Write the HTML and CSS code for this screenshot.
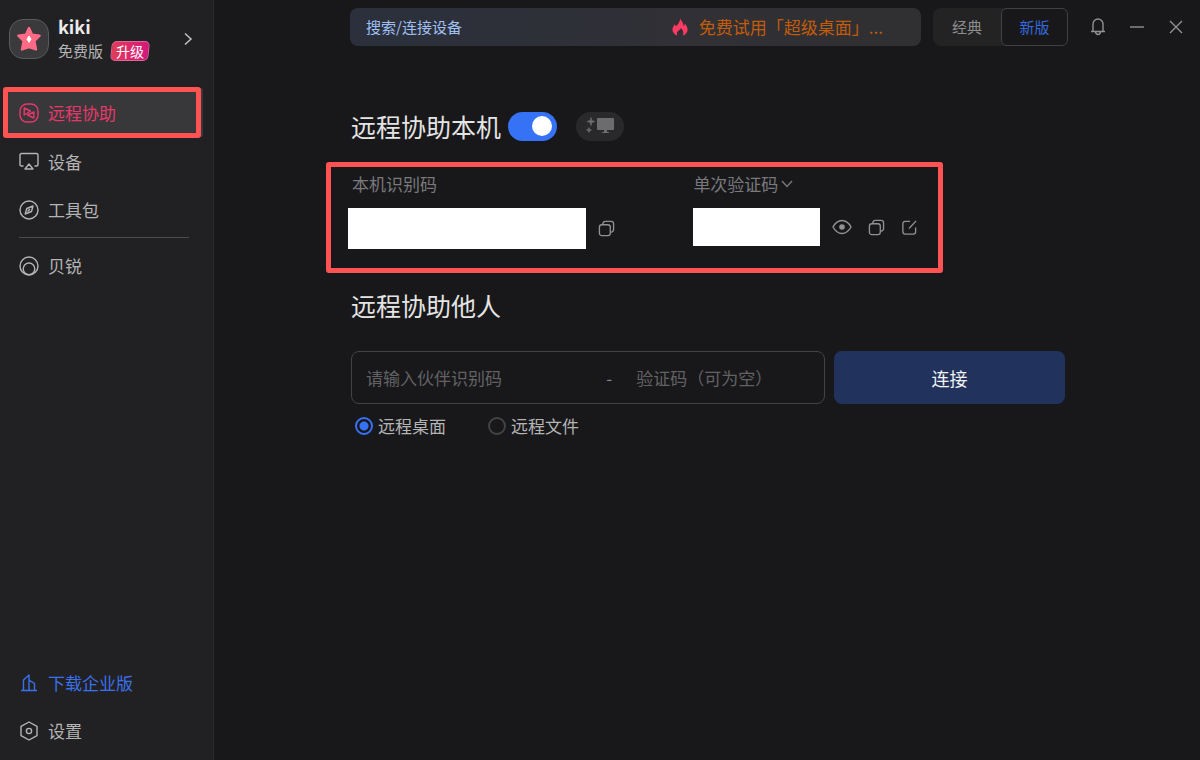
FILE: index.html
```html
<!DOCTYPE html>
<html lang="zh-CN">
<head>
<meta charset="utf-8">
<meta name="viewport" content="width=device-width, initial-scale=1">
<title>远程协助</title>
<link rel="stylesheet" href="styles.css">
</head>
<body>
<div class="app">
  <aside class="sidebar">
    <div class="profile">
      <span class="avatar">
        <svg width="26" height="26" viewBox="0 0 26 26" aria-hidden="true">
          <path d="M13 2 L16 8.600 L23.600 9.600 L18.400 15 L20 23.400 L13 21.200 L6 23.400 L7.600 15 L2.400 9.600 L10 8.600 Z" fill="#ff6b86" stroke="#ff6b86" stroke-width="2.400" stroke-linejoin="round"/>
          <path d="M13 10 L15 13.200 L13 16.400 L11 13.200 Z" fill="#fff" stroke="#fff" stroke-linejoin="round"/>
        </svg>
      </span>
      <div class="profile-text">
        <strong class="profile-name">kiki</strong>
        <div class="profile-plan">
          <span>免费版</span>
          <button class="upgrade" type="button"><span class="upgrade-shape"></span><span class="upgrade-label">升级</span></button>
        </div>
      </div>
      <button class="icon-button profile-more" type="button" aria-label="账号详情">
        <svg width="10" height="14" viewBox="0 0 10 14"><path d="M2 1.500 L8 7 L2 12.500" fill="none" stroke="currentColor" stroke-width="1.5"/></svg>
      </button>
    </div>

    <nav class="nav">
      <a class="nav-item nav-item-active" href="#assist" aria-current="page">
        <svg class="nav-icon" viewBox="0 0 20 20"><rect x="1" y="1" width="18" height="18" rx="7"/><path d="M5.200 5 L11.500 8 L5.200 12 Z M15 9 L8.500 12 L14.800 15 Z"/></svg>
        <span>远程协助</span>
      </a>
      <a class="nav-item" href="#devices">
        <svg class="nav-icon" viewBox="0 0 20 20"><path d="M4.500 14 H2.500 Q1 14 1 12.500 V3 Q1 1.500 2.500 1.500 H17.500 Q19 1.500 19 3 V12.500 Q19 14 17.500 14 H15.500"/><path d="M10 12 L14 17 H6 Z"/></svg>
        <span>设备</span>
      </a>
      <a class="nav-item" href="#tools">
        <svg class="nav-icon" viewBox="0 0 20 20"><circle cx="10" cy="10" r="9"/><path d="M14 6 L12.500 11.500 L6.200 14 L7.800 8.500 Z M8.600 11.400 L11 9"/></svg>
        <span>工具包</span>
      </a>
      <hr class="nav-rule">
      <a class="nav-item" href="#oray">
        <svg class="nav-icon" viewBox="0 0 20 20"><circle cx="10" cy="10" r="9"/><circle cx="10" cy="12.800" r="5.800"/></svg>
        <span>贝锐</span>
      </a>
    </nav>

    <nav class="nav nav-bottom">
      <a class="nav-item nav-item-link" href="#enterprise">
        <svg class="nav-icon" viewBox="0 0 20 20"><path d="M2 17.500 H18 M4.500 17.500 V7 L10 2 V17.500 M10 7.200 L15.500 10.500 V17.500"/></svg>
        <span>下载企业版</span>
      </a>
      <a class="nav-item" href="#settings">
        <svg class="nav-icon" viewBox="0 0 20 20"><path d="M10 1 L18 5.400 V14.600 L10 19 L2 14.600 V5.400 Z"/><circle cx="10" cy="10" r="2.600"/></svg>
        <span>设置</span>
      </a>
    </nav>
  </aside>

  <div class="main">
    <header class="topbar">
      <div class="search">
        <input class="search-input" type="text" placeholder="搜索/连接设备" aria-label="搜索/连接设备">
        <a class="promo" href="#trial">
          <svg width="16" height="18" viewBox="0 0 18 20" aria-hidden="true"><path d="M9 0 C10 3 13 5 13 9 C14 8.500 14.300 7.500 14.300 6 C16 8 17.500 10 17.500 13 C17.500 16 15.500 18.500 12 19.500 C13.500 17 13 14 10 11 C9.500 13.500 5.500 14 5.500 17 C5.500 18 5.700 18.800 6 19.500 C3 18.500 0.500 16 0.500 13 C0.500 10.500 2 9.500 2.800 7 C3.800 7.700 4.300 8.500 4.300 9.500 C6.500 7.500 9.500 4 9 0 Z" fill="#ff3b63"/></svg>
          <span>免费试用「超级桌面」...</span>
        </a>
      </div>
      <div class="segmented">
        <button class="segment" type="button">经典</button>
        <button class="segment segment-active" type="button" aria-pressed="true">新版</button>
      </div>
      <div class="window-tools">
        <button class="icon-button" type="button" aria-label="通知">
          <svg width="16" height="18" viewBox="0 0 16 18"><path d="M1 13.500 H15 M3 13.500 V6 A5 5 0 0 1 13 6 V13.500 M5.500 14 Q6 16.500 8 16.500 T10.500 14" fill="none" stroke="currentColor" stroke-width="1.400"/></svg>
        </button>
        <button class="icon-button" type="button" aria-label="最小化">
          <svg width="16" height="16" viewBox="0 0 16 16"><path d="M1 8 H15" stroke="currentColor" stroke-width="1.400"/></svg>
        </button>
        <button class="icon-button" type="button" aria-label="关闭">
          <svg width="16" height="16" viewBox="0 0 16 16"><path d="M2 2 L14 14 M14 2 L2 14" stroke="currentColor" stroke-width="1.400"/></svg>
        </button>
      </div>
    </header>

    <main class="content">
      <div class="heading-row">
        <h2 class="heading">远程协助本机</h2>
        <input class="switch" type="checkbox" checked aria-label="远程协助本机">
        <button class="screen-pill" type="button" aria-label="超级桌面">
          <svg width="28" height="18" viewBox="0 0 28 18"><path d="M5 0.500 L6 3.500 L9 4.500 L6 5.500 L5 8.500 L4 5.500 L1 4.500 L4 3.500 Z M3 10.500 L3.800 12.200 L5.500 13 L3.800 13.800 L3 15.500 L2.200 13.800 L0.500 13 L2.200 12.200 Z" fill="currentColor" stroke="currentColor" stroke-width="0.600"/><rect x="11" y="1" width="17" height="12" rx="1" fill="currentColor"/><path d="M18 13 H21 V14.500 L24 16 H15 L18 14.500 Z" fill="currentColor"/></svg>
        </button>
      </div>

      <section class="codes">
        <div class="code">
          <label class="code-label" for="device-code">本机识别码</label>
          <div class="code-row">
            <input class="code-value" id="device-code" type="text" readonly>
            <button class="icon-button" type="button" aria-label="复制识别码">
              <svg class="tool-icon" viewBox="0 0 18 18"><rect x="1.500" y="5" width="11.500" height="11.500" rx="2.500"/><path d="M5 4.500 Q5.200 1.500 8 1.500 H14 Q16.500 1.500 16.500 4 V10 Q16.500 12.500 13.500 13"/></svg>
            </button>
          </div>
        </div>
        <div class="code">
          <label class="code-label" for="verify-code">单次验证码<svg width="14" height="10" viewBox="0 0 14 10" aria-hidden="true"><path d="M2 2 L7 7.500 L12 2" fill="none" stroke="currentColor" stroke-width="1.400"/></svg></label>
          <div class="code-row">
            <input class="code-value code-value-short" id="verify-code" type="text" readonly>
            <div class="code-tools">
              <button class="icon-button" type="button" aria-label="显示验证码">
                <svg width="20" height="16" viewBox="0 0 20 16"><path d="M1 8 Q4.500 1.500 10 1.500 T19 8 Q15.500 14.500 10 14.500 T1 8 Z" fill="none" stroke="currentColor" stroke-width="1.400"/><circle cx="10" cy="8" r="2.800" fill="currentColor"/></svg>
              </button>
              <button class="icon-button" type="button" aria-label="复制验证码">
                <svg class="tool-icon" viewBox="0 0 18 18"><rect x="1.500" y="5" width="11.500" height="11.500" rx="2.500"/><path d="M5 4.500 Q5.200 1.500 8 1.500 H14 Q16.500 1.500 16.500 4 V10 Q16.500 12.500 13.500 13"/></svg>
              </button>
              <button class="icon-button" type="button" aria-label="修改验证码">
                <svg class="tool-icon" viewBox="0 0 18 18"><path d="M9.500 2.500 H4.500 Q2 2.500 2 5 V13.500 Q2 16 4.500 16 H13 Q15.500 16 15.500 13.500 V9 M8.500 10 L16 2"/></svg>
              </button>
            </div>
          </div>
        </div>
      </section>

      <h2 class="heading heading-remote">远程协助他人</h2>
      <form class="connect">
        <div class="connect-row">
          <div class="fields">
            <input class="field" type="text" placeholder="请输入伙伴识别码" aria-label="伙伴识别码">
            <span class="dash">-</span>
            <input class="field field-short" type="text" placeholder="验证码（可为空）" aria-label="验证码">
          </div>
          <button class="connect-button" type="button">连接</button>
        </div>
        <div class="modes">
          <label class="mode"><input class="radio" type="radio" name="mode" checked>远程桌面</label>
          <label class="mode"><input class="radio" type="radio" name="mode">远程文件</label>
        </div>
      </form>
    </main>
  </div>
</div>
</body>
</html>
```
FILE: styles.css
```css
* { box-sizing: border-box; }

body {
  margin: 0;
  background: #18181a;
  color: #b4b4b5;
  font-family: "Noto Sans CJK SC", "Noto Sans", sans-serif;
  font-size: 17px;
  line-height: 24px;
}

button, input { font: inherit; color: inherit; }
button { padding: 0; border: 0; background: none; }
input { margin: 0; min-width: 0; }
a { color: inherit; text-decoration: none; }
svg { display: block; flex: none; }

.icon-button {
  display: flex;
  align-items: center;
  justify-content: center;
  color: #919192;
}

.app { display: flex; min-height: 100vh; }

/* Sidebar */
.sidebar {
  display: flex;
  flex-direction: column;
  flex: none;
  width: 214px;
  padding: 15px 0 5px;
  background: #212123;
  border-right: 1px solid #29292b;
}

.profile {
  display: flex;
  align-items: center;
  gap: 9px;
  padding: 0 20px 0 9px;
}

.avatar {
  display: grid;
  place-items: center;
  width: 40px;
  height: 40px;
  border: 1px solid #5a5a5c;
  border-radius: 14px;
  background: #3a3a3c;
}

.profile-text { flex: 1; }
.profile-name { display: block; color: #ececec; font-size: 18px; line-height: 22px; }

.profile-plan {
  display: flex;
  align-items: center;
  gap: 8px;
  padding-top: 2px;
  font-size: 15px;
}

.upgrade {
  position: relative;
  width: 38px;
  height: 20px;
  color: #fff;
  font-size: 14px;
  line-height: 18px;
}

.upgrade-shape {
  position: absolute;
  inset: 0;
  border: 1px solid #e0659a;
  border-radius: 5px;
  background: linear-gradient(90deg, #e23c58, #d4177c);
  transform: skewX(-6deg);
}

.upgrade-label { position: relative; }
.profile-more { color: #c4c4c5; }

.nav { padding: 0 12px 0 3px; margin-top: 24px; }
.nav-bottom { margin-top: auto; }

.nav-item {
  display: flex;
  align-items: center;
  gap: 9px;
  height: 48px;
  padding-left: 16px;
}

.nav-icon {
  width: 20px;
  height: 20px;
  fill: none;
  stroke: currentColor;
  stroke-width: 1.4;
  stroke-linejoin: round;
}

.nav-item-active {
  height: 51px;
  padding-left: 11px;
  border: 5px solid #ff5252;
  border-radius: 3px;
  background: #38383a;
  color: #e5386a;
  box-shadow: 3px 0 0 -1px #38383a;
}

.nav-item-link { color: #3b70ec; }

.nav-rule {
  height: 1px;
  margin: 3px 12px 4px 16px;
  border: 0;
  background: #4b4b4d;
}

/* Top bar */
.main { flex: 1; min-width: 0; }

.topbar {
  display: flex;
  align-items: center;
  padding: 8px 16px 0 136px;
}

.search {
  display: flex;
  align-items: center;
  flex: 1;
  height: 38px;
  padding: 0 38px 0 16px;
  border-radius: 8px;
  background: linear-gradient(90deg, #2b303c, #303036 55%, #303032);
}

.search-input {
  flex: 1;
  padding: 0;
  border: 0;
  background: none;
  font-size: 15px;
}

.search-input::placeholder { color: #a0c0f5; opacity: 1; }

.promo {
  display: flex;
  align-items: center;
  gap: 11px;
  color: #c35c0a;
  white-space: nowrap;
}

.segmented {
  display: flex;
  margin-left: 12px;
  border-radius: 8px;
  background: #232324;
  font-size: 15px;
}

.segment {
  width: 68px;
  height: 38px;
  color: #8f8f90;
}

.segment-active {
  width: 67px;
  border: 1px solid #414143;
  border-radius: 6px;
  background: #18181a;
  color: #3468dc;
}

.window-tools { display: flex; gap: 23px; margin-left: 22px; }

/* Content */
.content { width: 73%; max-width: 960px; margin: 0 auto; padding: 64px 2px 0 4px; }
.heading-row { display: flex; align-items: center; }

.heading {
  margin: 0;
  color: #e4e4e4;
  font-size: 25px;
  font-weight: 400;
  line-height: 32px;
}

.switch {
  appearance: none;
  display: flex;
  align-items: center;
  justify-content: flex-end;
  width: 49px;
  height: 29px;
  margin-left: 7px;
  padding: 0 5px;
  border-radius: 15px;
  background: #3672f5;
}

.switch::before {
  content: "";
  width: 20px;
  height: 20px;
  border-radius: 50%;
  background: #fff;
}

.screen-pill {
  display: grid;
  place-items: center;
  width: 48px;
  height: 29px;
  margin-left: 19px;
  border-radius: 15px;
  background: #29292b;
  color: #6c6c6e;
}

.codes {
  display: grid;
  grid-template-columns: 346fr 245fr;
  margin: 20px 122px 0 -25px;
  padding: 5px 0 19px 17px;
  border: 5px solid #ff5252;
  border-radius: 3px;
}

.code-label {
  display: flex;
  align-items: center;
  gap: 2px;
  margin-bottom: 12px;
  padding-left: 4px;
  color: #79797b;
}

.code + .code .code-label { padding-left: 0; }
.code-row { display: flex; align-items: center; gap: 12px; }

.code-value {
  width: 238px;
  height: 41px;
  padding: 0 12px;
  border: 0;
  background: #fff;
  color: #18181a;
}

.code-value-short { width: 127px; height: 38px; }
.code-tools { display: flex; gap: 16px; }

.tool-icon {
  width: 17px;
  height: 17px;
  fill: none;
  stroke: currentColor;
  stroke-width: 1.4;
}

.heading-remote { margin-top: 16px; }
.connect { margin-top: 30px; }

.connect-row {
  display: grid;
  grid-template-columns: 475fr 231fr;
  gap: 9px;
}

.fields {
  display: flex;
  align-items: center;
  min-width: 0;
  padding: 0 14px;
  border: 1px solid #434345;
  border-radius: 8px;
}

.field {
  flex: 240;
  width: 0;
  padding: 0;
  border: 0;
  background: none;
}

.field-short { flex: 174; }
.field::placeholder { color: #626264; opacity: 1; }
.dash { margin-right: 24px; color: #8a8a8b; }

.connect-button {
  height: 53px;
  border-radius: 8px;
  background: #21325d;
  color: #f2f2f2;
  font-size: 18px;
}

.modes { display: flex; gap: 42px; margin: 10px 0 0 4px; }
.mode { display: flex; align-items: center; gap: 5px; }

.radio {
  appearance: none;
  width: 18px;
  height: 18px;
  border: 2px solid #434345;
  border-radius: 50%;
}

.radio:checked {
  border-color: #3672f5;
  background: radial-gradient(circle, #3672f5 4px, transparent 5px);
}
```
